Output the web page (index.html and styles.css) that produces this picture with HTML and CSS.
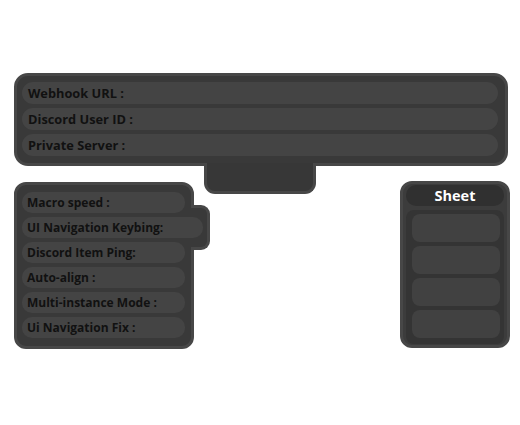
FILE: index.html
```html
<!DOCTYPE html>
<html lang="en">
<head>
  <meta charset="UTF-8">
  <meta name="viewport" content="width=device-width, initial-scale=1.0">
  <title>Macro Settings</title>
  <link rel="stylesheet" href="styles.css">
</head>
<body>

  <div class="page">
    <!-- Webhook settings -->
    <div class="top-panel">
      <div class="field">Webhook URL :</div>
      <div class="field">Discord User ID :</div>
      <div class="field">Private Server :</div>
      <div class="tab"></div>
    </div>

    <div class="bottom-row">
      <!-- General settings -->
      <div class="side-panel">
        <div class="option">Macro speed :</div>
        <div class="option wide">UI Navigation Keybing:</div>
        <div class="option">Discord Item Ping:</div>
        <div class="option">Auto-align :</div>
        <div class="option">Multi-instance Mode :</div>
        <div class="option">Ui Navigation Fix :</div>
        <div class="bump"></div>
      </div>

      <!-- Sheet buttons -->
      <div class="sheet-panel">
        <div class="sheet-title">Sheet</div>
        <div class="sheet-list">
          <div class="sheet-btn"></div>
          <div class="sheet-btn"></div>
          <div class="sheet-btn"></div>
          <div class="sheet-btn"></div>
        </div>
      </div>
    </div>
  </div>

</body>
</html>
```

FILE: styles.css
```css
* {
  box-sizing: border-box;
  margin: 0;
  padding: 0;
}

body {
  background: #fff;
  font-family: "Open Sans", "Noto Sans", sans-serif;
  font-weight: bold;
  color: #111;
}

.page {
  padding: 73px 0 0 14px;
}

/* Top panel */
.top-panel {
  position: relative;
  width: 494px;
  height: 93px;
  padding: 6px 7px 0 5px;
  border: 3px solid #474747;
  border-radius: 14px;
  background: #393939;
  display: flex;
  flex-direction: column;
  gap: 4px;
}

.field {
  height: 22px;
  padding-left: 6px;
  border-radius: 11px;
  background: #444;
  font-size: 12.8px;
  line-height: 22px;
}

.tab {
  position: absolute;
  top: 87px;
  left: 187px;
  width: 112px;
  height: 31px;
  border: 3px solid #474747;
  border-top: none;
  border-radius: 0 0 11px 11px;
  background: #373737;
}

/* Bottom row */
.bottom-row {
  display: flex;
  align-items: flex-start;
  margin-top: 15px;
}

.side-panel {
  position: relative;
  width: 180px;
  height: 167px;
  margin-top: 1px;
  padding: 7px 6px 0 5px;
  border: 3px solid #474747;
  border-radius: 12px;
  background: #393939;
  display: flex;
  flex-direction: column;
  gap: 4px;
}

.option {
  position: relative;
  z-index: 1;
  height: 21px;
  padding-left: 5px;
  border-radius: 10px;
  background: #444;
  font-size: 12px;
  line-height: 21px;
  white-space: nowrap;
}

.option.wide {
  width: 181px;
}

.bump {
  position: absolute;
  top: 20px;
  left: 174px;
  width: 19px;
  height: 45px;
  border: 3px solid #474747;
  border-left: none;
  border-radius: 0 9px 9px 0;
  background: #393939;
}

/* Sheet panel */
.sheet-panel {
  width: 110px;
  height: 167px;
  margin-left: 206px;
  padding: 1px 3px 0 3px;
  border: 3px solid #474747;
  border-radius: 12px;
  background: #3c3c3c;
}

.sheet-title {
  height: 21px;
  border-radius: 10px;
  background: #303030;
  color: #fff;
  font-size: 14.5px;
  line-height: 21px;
  text-align: center;
}

.sheet-list {
  width: 98px;
  height: 134px;
  margin-top: 4px;
  padding: 4px 4px 0 6px;
  border-radius: 8px;
  background: #343434;
  display: flex;
  flex-direction: column;
  gap: 4px;
}

.sheet-btn {
  width: 88px;
  height: 28px;
  border-radius: 8px;
  background: #414141;
}
```
